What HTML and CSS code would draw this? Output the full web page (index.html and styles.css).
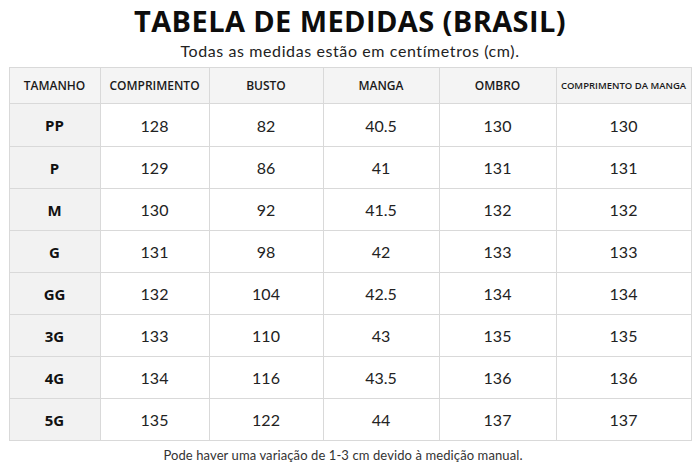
FILE: index.html
```html
<!DOCTYPE html>
<html lang="pt-BR">
<head>
<meta charset="utf-8">
<title>Tabela de Medidas</title>
<link rel="stylesheet" href="styles.css">
</head>
<body>
<div class="page">
  <h1 class="title">TABELA DE MEDIDAS (BRASIL)</h1>
  <p class="subtitle">Todas as medidas estão em centímetros (cm).</p>
  <table class="sizes">
    <colgroup>
      <col class="c1"><col class="c2"><col class="c3"><col class="c4"><col class="c5"><col class="c6">
    </colgroup>
    <thead>
      <tr>
        <th>TAMANHO</th><th>COMPRIMENTO</th><th>BUSTO</th><th>MANGA</th><th>OMBRO</th><th class="small">COMPRIMENTO DA MANGA</th>
      </tr>
    </thead>
    <tbody>
      <tr class="first"><th>PP</th><td>128</td><td>82</td><td>40.5</td><td>130</td><td>130</td></tr>
      <tr><th>P</th><td>129</td><td>86</td><td>41</td><td>131</td><td>131</td></tr>
      <tr><th>M</th><td>130</td><td>92</td><td>41.5</td><td>132</td><td>132</td></tr>
      <tr><th>G</th><td>131</td><td>98</td><td>42</td><td>133</td><td>133</td></tr>
      <tr><th>GG</th><td>132</td><td>104</td><td>42.5</td><td>134</td><td>134</td></tr>
      <tr><th>3G</th><td>133</td><td>110</td><td>43</td><td>135</td><td>135</td></tr>
      <tr><th>4G</th><td>134</td><td>116</td><td>43.5</td><td>136</td><td>136</td></tr>
      <tr><th>5G</th><td>135</td><td>122</td><td>44</td><td>137</td><td>137</td></tr>
    </tbody>
  </table>
  <p class="note">Pode haver uma variação de 1-3 cm devido à medição manual.</p>
</div>
</body>
</html>
```
FILE: styles.css
```css
html, body {
  margin: 0;
  padding: 0;
  background: #ffffff;
}
.page {
  width: 700px;
  height: 467px;
  display: flex;
  flex-direction: column;
  align-items: center;
  font-family: "Lato", "Noto Sans", sans-serif;
  color: #1a1a1a;
}
.title {
  margin: 2px 0 0 0;
  font-family: "Open Sans", sans-serif;
  font-weight: 700;
  font-size: 29px;
  line-height: 38px;
  letter-spacing: 0.4px;
  color: #0d0d0d;
}
.subtitle {
  margin: 0;
  font-size: 16px;
  line-height: 22px;
  letter-spacing: 0.6px;
  color: #222;
}
.sizes {
  margin-top: 5px;
  width: 682px;
  border-collapse: collapse;
  table-layout: fixed;
  border: 1px solid #d4d4d4;
}
.c1 { width: 91px; }
.c2 { width: 109px; }
.c3 { width: 114px; }
.c4 { width: 116px; }
.c5 { width: 117px; }
.c6 { width: 135px; }
.sizes th, .sizes td {
  border: 1px solid #d9d9d9;
  text-align: center;
  padding: 0;
}
.sizes thead th {
  height: 35px;
  background: #f4f4f4;
  font-family: "Open Sans", sans-serif;
  font-weight: 600;
  font-size: 12px;
  color: #1a1a1a;
}
.sizes thead th.small {
  font-size: 9.5px;
}
.sizes tbody th {
  background: #f2f2f2;
  font-family: "Open Sans", sans-serif;
  font-weight: 700;
  font-size: 15px;
  color: #111;
}
.sizes tbody td {
  font-size: 16px;
  color: #222;
  background: #fff;
}
.sizes tbody tr {
  height: 42px;
}
.sizes tbody tr.first {
  height: 43px;
}
.note {
  margin: 6px 14px 0 0;
  font-size: 13px;
  line-height: 16px;
  letter-spacing: 0.1px;
  color: #333;
}
```
